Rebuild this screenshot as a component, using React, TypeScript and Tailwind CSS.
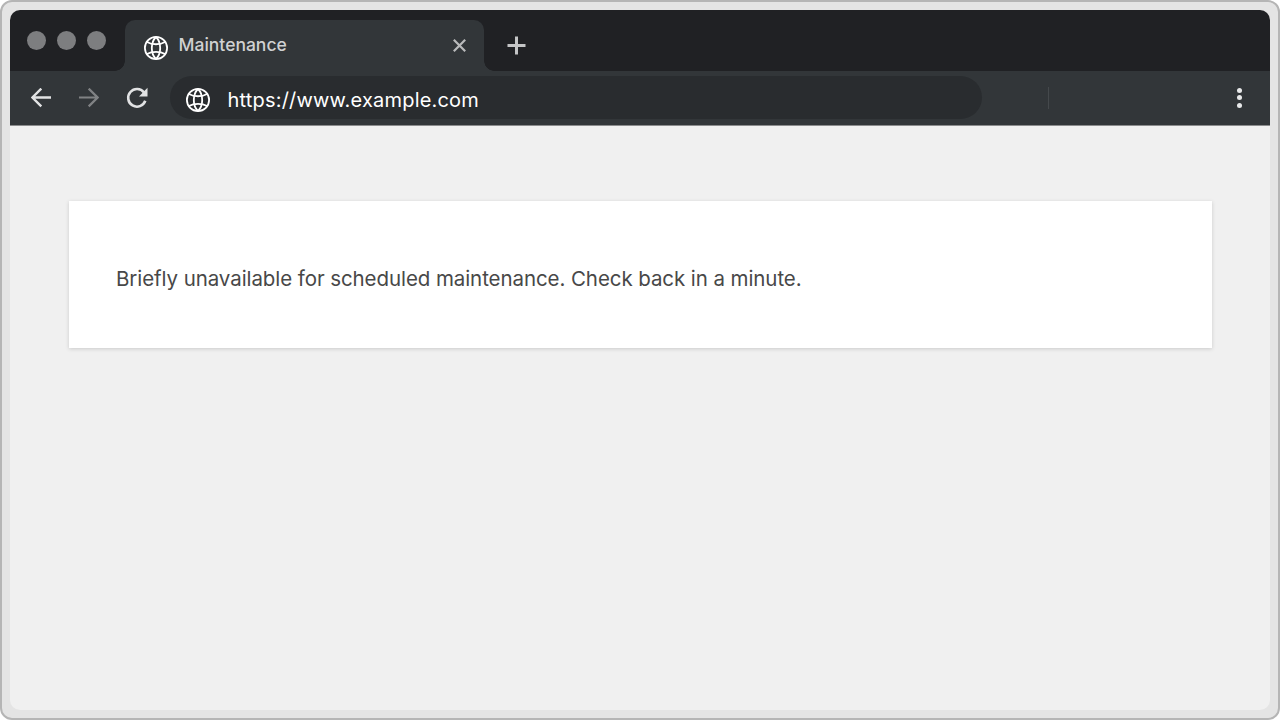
import React from 'react'

interface IconProps {
  className?: string
}

const GlobeIcon: React.FC<IconProps> = ({ className }) => (
  <svg
    viewBox="0 0 24 24"
    fill="none"
    stroke="white"
    strokeWidth="1.8"
    className={`size-6 shrink-0 ${className ?? ''}`}
  >
    <circle cx="12" cy="12" r="11.1" />
    <path d="M12 1C6.400 6.500 6.400 17.500 12 23M12 1c5.600 5.500 5.600 16.500 0 22" />
    <path d="M3 5.900C8 9 16 9 21 5.900M3 18.100c5-3.100 13-3.100 18 0" />
  </svg>
)

const TabStrip = () => (
  <div className="flex h-[61px] bg-[#202124]">
    <div className="flex w-[115px] gap-[11px] pl-[17px] pt-[21px]">
      <span className="size-[19px] rounded-full bg-[#7d7e80]" />
      <span className="size-[19px] rounded-full bg-[#7d7e80]" />
      <span className="size-[19px] rounded-full bg-[#7d7e80]" />
    </div>

    <div className="relative mt-[10px] flex h-[51px] w-[359px] rounded-t-[10px] bg-[#323639]">
      {/* Flared feet of the active tab */}
      <span className="absolute bottom-0 -left-[10px] size-[10px] bg-[radial-gradient(circle_at_0_0,#202124_9.5px,#323639_10px)]" />
      <span className="absolute bottom-0 -right-[10px] size-[10px] bg-[radial-gradient(circle_at_100%_0,#202124_9.5px,#323639_10px)]" />
      <GlobeIcon className="ml-[19px] mt-4" />
      <span className="ml-[10.5px] mt-[13px] text-[17.5px] leading-[23px] font-medium text-[#d0d1d2]">
        Maintenance
      </span>
      <svg viewBox="0 0 13 13" className="absolute left-[328px] top-[19px] size-[13px]" stroke="#b9babb" strokeWidth="2.2">
        <path d="M.8.8l11.400 11.400M12.200.8L.8 12.200" />
      </svg>
    </div>

    <svg viewBox="0 0 19 19" className="ml-[23px] mt-[26px] size-[19px]" stroke="#c4c5c6" strokeWidth="3">
      <path d="M9.500.5v18M.5 9.500h18" />
    </svg>
  </div>
)

const Toolbar = () => (
  <div className="flex h-[55px] border-b border-[#8b8c8d] bg-[#323639]">
    <svg viewBox="0 0 20 20" fill="none" stroke="#e2e3e4" strokeWidth="2.4" className="ml-[21px] mt-[17px] size-5">
      <path d="M20 9.500H1.500M10.300.6L1.400 9.500l8.900 8.900" />
    </svg>
    <svg viewBox="0 0 20 20" fill="none" stroke="#808284" strokeWidth="2.2" className="ml-7 mt-[17px] size-5">
      <path d="M0 9.500h18.500M9.700.6l8.900 8.900-8.900 8.900" />
    </svg>
    <svg viewBox="0 0 22 22" fill="none" stroke="#e2e3e4" strokeWidth="2.6" className="ml-[27px] mt-4 size-[22px]">
      <path d="M18 5.500A8.800 8.800 0 1 0 19.300 13.800" />
      <path d="M21.500.8v8.700H13z" fill="#e2e3e4" stroke="none" />
    </svg>

    <div className="ml-[22px] mt-[5px] flex h-[43px] w-[812px] rounded-full bg-[#292c2f]">
      <GlobeIcon className="ml-4 mt-3" />
      <span className="ml-[17.5px] mt-3 text-[20px] leading-6 tracking-[0.19px] text-white">https://www.example.com</span>
    </div>

    <span className="ml-[66px] mt-4 h-[22px] w-px bg-[#45494c]" />
    <div className="ml-auto mr-[28.5px] mt-[16.5px] flex flex-col gap-[2.5px]">
      <span className="size-[5px] rounded-full bg-[#e8e9ea]" />
      <span className="size-[5px] rounded-full bg-[#e8e9ea]" />
      <span className="size-[5px] rounded-full bg-[#e8e9ea]" />
    </div>
  </div>
)

export default function App() {
  return (
    <div className="h-[720px] w-[1280px] bg-white font-['Inter',sans-serif]">
      <div className="h-full rounded-[12px] border-2 border-[#b5b5b5] bg-[#e4e4e4] p-2">
        <div className="flex h-full flex-col overflow-hidden rounded-[10px] bg-[#f0f0f0]">
          <TabStrip />
          <Toolbar />
          <main className="px-[59px] pt-[75px]">
            <div className="h-[147px] w-[1143px] bg-white px-[47px] pt-[62px] shadow-[0_1px_4px_rgba(0,0,0,0.16)]">
              <p className="whitespace-nowrap text-[20.5px] leading-8 tracking-[-0.08px] text-[#484848]">
                Briefly unavailable for scheduled maintenance. Check back in a minute.
              </p>
            </div>
          </main>
        </div>
      </div>
    </div>
  )
}
